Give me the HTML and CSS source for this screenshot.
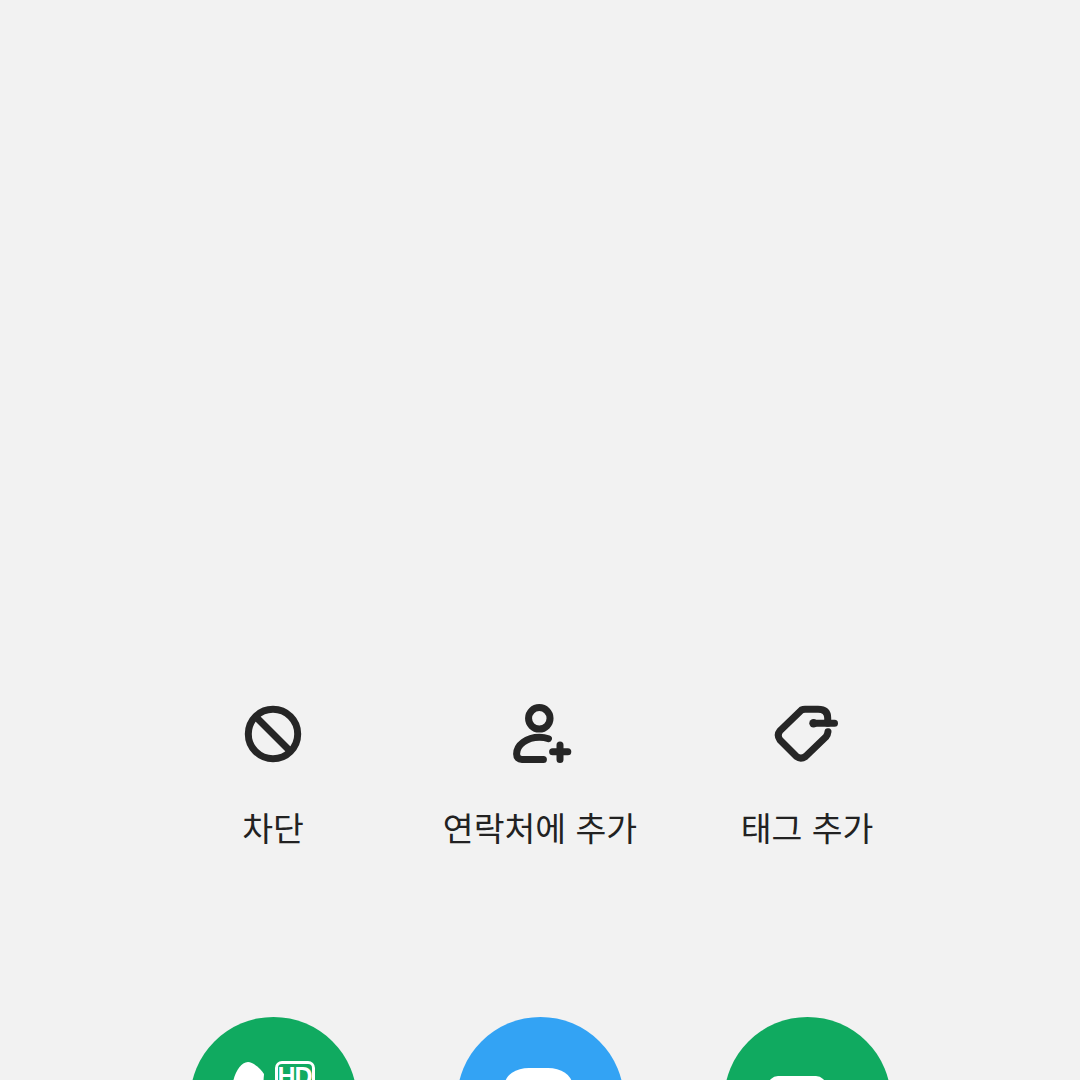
FILE: index.html
```html
<!DOCTYPE html>
<html lang="ko">
<head>
    <meta charset="UTF-8">
    <meta name="viewport" content="width=device-width, initial-scale=1.0">
    <title>통화 종료</title>
    <link rel="stylesheet" href="styles.css">
</head>
<body>
    <div class="screen">
        <div class="actions">
            <div class="action">
                <svg class="action-icon" viewBox="0 0 72 72">
                    <circle cx="36" cy="36" r="24.7"/>
                    <path d="M20 20 L52 52"/>
                </svg>
                <span class="action-label">차단</span>
            </div>
            <div class="action">
                <svg class="action-icon" viewBox="0 0 72 72">
                    <circle cx="35.3" cy="20.3" r="10.75"/>
                    <path d="M44.5 40.7 C41.5 39.7 38.5 39.3 35.5 39.3 C22.5 39.3 12.6 47 12.6 56 C12.6 59.5 14.5 61.4 18 61.4 H39.4"/>
                    <path d="M48.6 53.7 H63.8 M56 47 V61.4"/>
                </svg>
                <span class="action-label">연락처에 추가</span>
            </div>
            <div class="action">
                <svg class="action-icon" viewBox="0 0 72 72">
                    <path d="M57 33.7 Q56.7 36.7 55 38.7 L34.5 58.5 Q29.7 61.7 25.5 58.5 L9 42 Q5.5 37 9 32.7 L30.5 12 Q32 11.3 34 11.3 H47 Q56.7 11.3 56.7 20 V25.3"/>
                    <path d="M42.5 25.3 H63.5"/>
                    <circle class="tag-dot" cx="42.5" cy="25.3" r="4.2"/>
                </svg>
                <span class="action-label">태그 추가</span>
            </div>
        </div>

        <div class="calls">
            <div class="call call-green">
                <svg class="call-phone" viewBox="0 0 60 40">
                    <path d="M2 20 C4 10 10 0 17 0 C22 0 30 7 33 12 L31 40 H2 Z"/>
                </svg>
                <span class="hd-badge">HD</span>
            </div>
            <div class="call call-blue">
                <div class="call-bubble"></div>
            </div>
            <div class="call call-green">
                <div class="call-video"></div>
            </div>
        </div>
    </div>
</body>
</html>
```

FILE: styles.css
```css
body {
    margin: 0;
    background-color: #f2f2f2;
    font-family: "Noto Sans CJK KR", "Noto Sans", sans-serif;
    color: #222;
}

.screen {
    height: 1080px;
    overflow: hidden;
    padding-top: 698px;
    box-sizing: border-box;
}

/* --- actions --- */
.actions,
.calls {
    display: grid;
    grid-template-columns: repeat(3, 267px);
    justify-content: center;
}

.action {
    display: flex;
    flex-direction: column;
    align-items: center;
}

.action-icon {
    width: 72px;
    height: 72px;
    fill: none;
    stroke: #262626;
    stroke-width: 7;
    stroke-linecap: round;
    stroke-linejoin: round;
}

.tag-dot {
    fill: #262626;
    stroke: none;
}

.action-label {
    margin-top: 33px;
    font-size: 33.5px;
    line-height: 48px;
    white-space: nowrap;
}

/* --- call buttons --- */
.calls {
    margin-top: 166px;
}

.call {
    position: relative;
    width: 167px;
    height: 167px;
    border-radius: 50%;
    justify-self: center;
}

.call-green {
    background-color: #10aa60;
}

.call-blue {
    background-color: #33a3f4;
}

.call-phone {
    position: absolute;
    left: 41px;
    top: 45px;
    width: 60px;
    height: 40px;
    fill: #fff;
}

.hd-badge {
    position: absolute;
    left: 85px;
    top: 44px;
    width: 40px;
    height: 36px;
    box-sizing: border-box;
    border: 3px solid #fff;
    border-radius: 7px;
    color: #fff;
    font-family: "Liberation Sans", sans-serif;
    font-size: 25px;
    font-weight: bold;
    line-height: 24px;
    letter-spacing: -1px;
    text-align: center;
}

.call-bubble {
    position: absolute;
    left: 48px;
    top: 51px;
    width: 67px;
    height: 70px;
    border-radius: 24px 24px 0 0 / 16px 16px 0 0;
    background-color: #fff;
}

.call-video {
    position: absolute;
    left: 44px;
    top: 59px;
    width: 58px;
    height: 60px;
    border-radius: 10px;
    background-color: #fff;
}
```
